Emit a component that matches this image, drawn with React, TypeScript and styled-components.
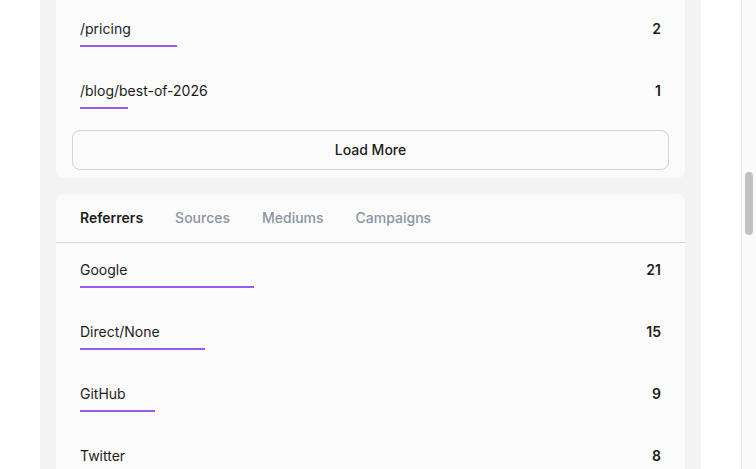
import styled, { createGlobalStyle } from 'styled-components'

const GlobalStyle = createGlobalStyle`
  html, body {
    margin: 0;
    padding: 0;
    background: #ffffff;
    font-family: Inter, 'Noto Sans', sans-serif;
    color: #1a1a1a;
    -webkit-font-smoothing: antialiased;
  }
`

type Item = { label: string; count: number }

const pages: Item[] = [
  { label: '/pricing', count: 2 },
  { label: '/blog/best-of-2026', count: 1 }
]
const pagesTotal = 12

const referrers: Item[] = [
  { label: 'Google', count: 21 },
  { label: 'Direct/None', count: 15 },
  { label: 'GitHub', count: 9 },
  { label: 'Twitter', count: 8 }
]
const referrersTotal = 70

const tabs = ['Referrers', 'Sources', 'Mediums', 'Campaigns']

function StatRow({ item, total }: { item: Item; total: number }) {
  return (
    <Row>
      <RowHead>
        <Label>{item.label}</Label>
        <Count>{item.count}</Count>
      </RowHead>
      <Bar style={{ width: `${(item.count / total) * 100}%` }} />
    </Row>
  )
}

function App() {
  return (
    <>
      <GlobalStyle />
      <Screen>
        <Main>
          <Column>
            <Card $padTop>
              <Rows>
                {pages.map((p) => (
                  <StatRow key={p.label} item={p} total={pagesTotal} />
                ))}
              </Rows>
              <LoadMore>Load More</LoadMore>
            </Card>
            <Card>
              <TabBar>
                {tabs.map((tab, i) => (
                  <Tab key={tab} data-active={i === 0}>
                    {tab}
                  </Tab>
                ))}
              </TabBar>
              <Rows>
                {referrers.map((r) => (
                  <StatRow key={r.label} item={r} total={referrersTotal} />
                ))}
              </Rows>
            </Card>
          </Column>
        </Main>
        <ScrollTrack>
          <ScrollThumb />
        </ScrollTrack>
      </Screen>
    </>
  )
}

const Screen = styled.div`
  display: flex;
  width: 756px;
  height: 469px;
  overflow: hidden;
`

const Main = styled.div`
  flex: 1;
  padding-left: 40px;
  overflow: hidden;
`

const Column = styled.div`
  width: 629px;
  padding: 0 16px 16px;
  background: #f3f3f3;
  display: flex;
  flex-direction: column;
  gap: 16px;
  /* page is scrolled a little: the first card's top edge is out of view */
  margin-top: -6px;
`

const Card = styled.div<{ $padTop?: boolean }>`
  background: #fbfbfb;
  border-radius: 8px;
  padding-top: ${({ $padTop }) => ($padTop ? '8px' : '0')};
  padding-bottom: 8px;
`

const Rows = styled.div`
  display: flex;
  flex-direction: column;
`

const Row = styled.div`
  display: flex;
  flex-direction: column;
  gap: 6px;
  padding: 17px 24px;
`

const RowHead = styled.div`
  display: flex;
  justify-content: space-between;
  align-items: center;
`

const Label = styled.div`
  font-size: 14px;
  line-height: 20px;
  color: #1c1c1c;
`

const Bar = styled.div`
  height: 2px;
  background: #9a5ce5;
`

const Count = styled.div`
  font-size: 14px;
  line-height: 20px;
  font-weight: 600;
  color: #1c1c1c;
`

const LoadMore = styled.button`
  display: block;
  width: calc(100% - 32px);
  margin: 4px 16px 0;
  height: 40px;
  padding: 0 0 1px;
  border: 1px solid #c9d4e5;
  border-radius: 8px;
  background: #fbfbfb;
  font-family: Inter, 'Noto Sans', sans-serif;
  font-size: 14px;
  font-weight: 500;
  color: #1c1c1c;
  cursor: pointer;
`

const TabBar = styled.div`
  display: flex;
  gap: 32px;
  align-items: center;
  padding: 0 24px 1px;
  box-sizing: border-box;
  border-bottom: 1px solid #cbd8e8;
  height: 49px;
`

const Tab = styled.div`
  font-size: 14px;
  font-weight: 500;
  color: #8a95a1;
  cursor: pointer;
  &[data-active='true'] {
    font-weight: 600;
    color: #1c1c1c;
  }
`

const ScrollTrack = styled.div`
  flex: none;
  width: 8px;
  border-left: 1px solid #e8e8e8;
  background: #fafafa;
  padding: 172px 3px 0 3px;
`

const ScrollThumb = styled.div`
  width: 8px;
  height: 63px;
  border-radius: 4px;
  background: #c1c1c1;
`

export default App
